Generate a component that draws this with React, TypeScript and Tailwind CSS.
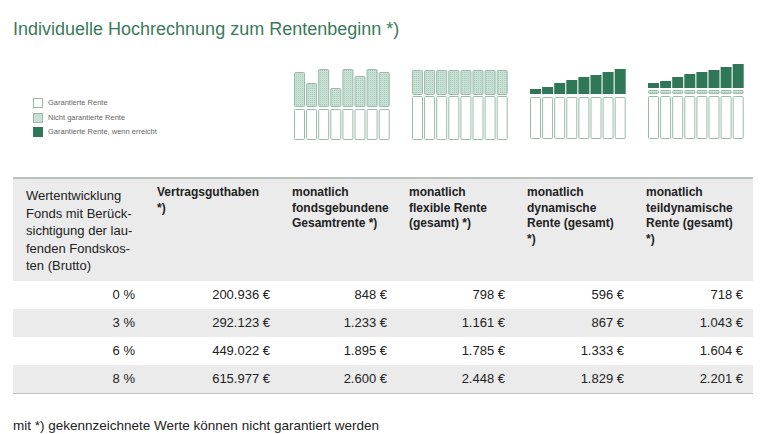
import React from "react";

const BORDER = "#97bba9";
const DARK = "#2f7757";

function Defs({ id }: { id: string }) {
  return (
    <defs>
      <pattern id={id} width="2" height="2" patternUnits="userSpaceOnUse">
        <rect width="2" height="2" fill="#c9e1d4" />
        <rect width="1" height="1" fill="#a9cbb9" />
      </pattern>
    </defs>
  );
}

const X0 = 0.5;
const PITCH = 12.1;
const BW = 10;

function Lower({ top, bottom }: { top: number; bottom: number }) {
  return (
    <>
      {Array.from({ length: 8 }).map((_, i) => (
        <rect
          key={i}
          x={X0 + i * PITCH}
          y={top}
          width={BW}
          height={bottom - top}
          rx="1"
          fill="#fff"
          stroke={BORDER}
          strokeWidth="1"
        />
      ))}
    </>
  );
}

// SVG origin = page y 60
const O = 60;

function Chart1() {
  const tops = [72, 83, 69, 88, 69, 76, 69, 72];
  return (
    <svg width="98" height="82" viewBox="0 0 98 82">
      <Defs id="h1" />
      {tops.map((t, i) => (
        <rect key={i} x={X0 + i * PITCH} y={t - O + 0.5} width={BW} height={106 - t} rx="1" fill="url(#h1)" stroke={BORDER} />
      ))}
      <Lower top={109 - O + 0.5} bottom={139 - O + 0.5} />
    </svg>
  );
}

function Chart2() {
  return (
    <svg width="98" height="82" viewBox="0 0 98 82">
      <Defs id="h2" />
      {Array.from({ length: 8 }).map((_, i) => (
        <rect key={i} x={X0 + i * PITCH} y={70 - O + 0.5} width={BW} height={24} rx="1" fill="url(#h2)" stroke={BORDER} />
      ))}
      <Lower top={96 - O + 0.5} bottom={139 - O + 0.5} />
    </svg>
  );
}

function Chart3() {
  const tops = [89, 87, 83, 80, 77, 75, 72, 69];
  return (
    <svg width="98" height="82" viewBox="0 0 98 82">
      {tops.map((t, i) => (
        <rect key={i} x={X0 + i * PITCH - 0.5} y={t - O} width={BW + 1} height={94 - t} fill={DARK} />
      ))}
      <Lower top={97 - O + 0.5} bottom={138 - O + 0.5} />
    </svg>
  );
}

function Chart4() {
  const tops = [83, 81, 77, 74, 72, 70, 67, 64];
  return (
    <svg width="98" height="82" viewBox="0 0 98 82">
      <Defs id="h4" />
      {tops.map((t, i) => (
        <rect key={i} x={X0 + i * PITCH - 0.5} y={t - O} width={BW + 1} height={88 - t} fill={DARK} />
      ))}
      {Array.from({ length: 8 }).map((_, i) => (
        <rect key={"s" + i} x={X0 + i * PITCH} y={90 - O + 0.5} width={BW} height={3} rx="1" fill="url(#h4)" stroke={BORDER} />
      ))}
      <Lower top={96 - O + 0.5} bottom={138 - O + 0.5} />
    </svg>
  );
}

const rows = [
  ["0 %", "200.936 €", "848 €", "798 €", "596 €", "718 €"],
  ["3 %", "292.123 €", "1.233 €", "1.161 €", "867 €", "1.043 €"],
  ["6 %", "449.022 €", "1.895 €", "1.785 €", "1.333 €", "1.604 €"],
  ["8 %", "615.977 €", "2.600 €", "2.448 €", "1.829 €", "2.201 €"],
];

const headers: string[][] = [
  ["Vertragsguthaben", "*)"],
  ["monatlich", "fondsgebundene", "Gesamtrente *)"],
  ["monatlich", "flexible Rente", "(gesamt) *)"],
  ["monatlich", "dynamische", "Rente (gesamt)", "*)"],
  ["monatlich", "teildynamische", "Rente (gesamt)", "*)"],
];

const GRID = "grid grid-cols-[132px_135px_117px_118px_119px_119px]";

export default function App() {
  return (
    <div className="w-[768px] h-[434px] bg-white overflow-hidden font-['Liberation_Sans',Arial,sans-serif] text-[#222]">
      <h1 className="pt-[19px] pl-[13px] text-[18px] leading-[21px] text-[#3a7a5a]">
        Individuelle Hochrechnung zum Rentenbeginn *)
      </h1>

      <div className="mt-[20px] flex h-[82px]">
        <div className="w-[294px] pl-[33px] pt-[38px] flex flex-col">
          {[
            ["bg-white border-[#97bba9]", "Garantierte Rente"],
            ["bg-[#c9e1d4] border-[#97bba9]", "Nicht garantierte Rente"],
            ["bg-[#2f7757] border-[#2f7757]", "Garantierte Rente, wenn erreicht"],
          ].map(([cls, label]) => (
            <div key={label} className="h-[15.5px] flex items-start gap-[5px]">
              <span className={"w-[10px] h-[10px] border " + cls} />
              <span className="text-[7.5px] leading-[10px] text-[#666]">{label}</span>
            </div>
          ))}
        </div>
        <div className="flex gap-[20px]">
          <Chart1 />
          <Chart2 />
          <Chart3 />
          <Chart4 />
        </div>
      </div>

      <div className="ml-[13px] mt-[35px] w-[740px] border-b border-[#b9c2bd]">
        <div className={GRID + " h-[104px] bg-[#ebebeb] border-t-2 border-[#b9c2bd]"}>
          <div className="pl-[13px] pt-[8px] text-[13px] leading-[17.5px]">
            Wertentwicklung
            <br />
            Fonds mit Berück-
            <br />
            sichtigung der lau-
            <br />
            fenden Fondskos-
            <br />
            ten (Brutto)
          </div>
          {headers.map((lines, i) => (
            <div key={i} className="pl-[12px] pt-[6px] text-[12px] leading-[15.5px] font-bold">
              {lines.map((l, j) => (
                <div key={j}>{l}</div>
              ))}
            </div>
          ))}
        </div>
        {rows.map((r, i) => (
          <div key={i} className={GRID + " h-[28px] items-center text-[13px] " + (i % 2 === 1 ? "bg-[#ebebeb]" : "bg-white")}>
            {r.map((c, j) => (
              <div key={j} className="text-right pr-[10px]">
                {c}
              </div>
            ))}
          </div>
        ))}
      </div>

      <p className="mt-[24px] pl-[13px] text-[13.5px] leading-[15px]">
        mit *) gekennzeichnete Werte können nicht garantiert werden
      </p>
    </div>
  );
}
